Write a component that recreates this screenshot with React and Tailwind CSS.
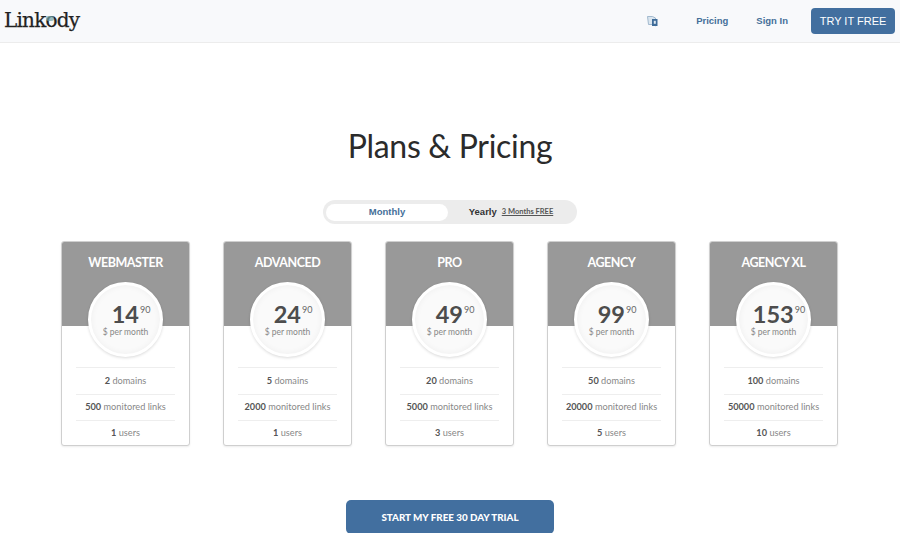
const plans = [
  { name: "WEBMASTER", price: "14", d: "2", l: "500", u: "1" },
  { name: "ADVANCED", price: "24", d: "5", l: "2000", u: "1" },
  { name: "PRO", price: "49", d: "20", l: "5000", u: "3" },
  { name: "AGENCY", price: "99", d: "50", l: "20000", u: "5" },
  { name: "AGENCY XL", price: "153", d: "100", l: "50000", u: "10" },
];

const sans = "font-['Lato','Noto_Sans',sans-serif]";

function Row({ value, label, border }) {
  return (
    <div className={`h-[26px] flex items-center justify-center text-[9.2px] text-[#888] ${border ? "border-t border-[#eeeeee] pb-[1px]" : ""}`}>
      <span><b className="font-bold text-[#555]">{value}</b> {label}</span>
    </div>
  );
}

function Card({ p }) {
  return (
    <div className="w-[129px] h-[205px] rounded-[3px] border border-[#cfcfcf] shadow-[0_1px_2px_rgba(0,0,0,0.08)] bg-white relative overflow-hidden">
      <div className="h-[84px] bg-[#999999] flex justify-center pt-[12px] text-[12.5px] tracking-[-0.45px] font-bold text-white leading-[17px]">
        {p.name}
      </div>
      <div className="absolute left-[26px] top-[40px] w-[75px] h-[75px] rounded-full border-[3px] border-white bg-[#fafafa] shadow-[0_1px_3px_rgba(0,0,0,0.15),inset_0_0_6px_rgba(0,0,0,0.05)] flex flex-col items-center">
        <div className="flex items-start mt-[19px] ml-[11px] text-[#4d4d4d] leading-none">
          <span className="text-[23.5px] font-bold leading-[20px]">{p.price}</span>
          <span className="text-[9px] ml-[1px] mt-[1px] leading-[10px] text-[#666]">90</span>
        </div>
        <div className="mt-[3px] text-[8.5px] text-[#888] leading-[11px]">$ per month</div>
      </div>
      <div className="mt-[41px] mx-[14px] border-t border-[#eeeeee]">
        <Row value={p.d} label="domains" />
        <Row value={p.l} label="monitored links" border />
        <Row value={p.u} label="users" border />
      </div>
    </div>
  );
}

export default function App() {
  return (
    <div className={`w-[900px] h-[533px] bg-white overflow-hidden ${sans}`}>
      <header className="h-[43px] bg-[#f8f9fb] border-b border-[#ececec] flex items-center">
        <div className="ml-[4px] text-[20px] leading-none font-['DejaVu_Serif',serif] text-[#222] tracking-[-0.8px] [-webkit-text-stroke:0.25px_#222] relative -top-[1px]">
          Link<span className="relative">o<span className="absolute left-[1px] top-[8px] w-[8px] h-[5px] rounded-full bg-[#6fa3a8] opacity-70" /></span>dy
        </div>
        <div className="ml-auto flex items-center font-['Liberation_Sans',sans-serif]">
          <svg width="11" height="11" viewBox="0 0 11 11" className="mr-[38px]">
            <path d="M0.5 0.5h5l3 1.5v8l-3-1.5H1.5z" fill="#dbe6ef" stroke="#8fabc4" strokeWidth="0.8" />
            <rect x="5" y="3" width="5.5" height="7" fill="#3f6c99" />
            <rect x="6.8" y="4.8" width="2" height="3" fill="#dbe6ef" />
          </svg>
          <a className="text-[9.5px] font-bold text-[#456f99] mr-[28px]">Pricing</a>
          <a className="text-[9.5px] font-bold text-[#456f99] mr-[23px]">Sign In</a>
          <a className="w-[84px] h-[26px] mr-[5px] rounded-[4px] bg-[#426f9f] text-white text-[11px] flex items-center justify-center">TRY IT FREE</a>
        </div>
      </header>

      <h1 className="mt-[81px] h-[44px] text-center text-[32px] leading-[44px] text-[#2b2b2b] font-['Lato',sans-serif] tracking-[-0.3px]">
        Plans &amp; Pricing
      </h1>

      <div className="mt-[32px] mx-auto w-[254px] h-[24px] rounded-full bg-[#ececec] flex items-center p-[3px] font-['Liberation_Sans',sans-serif]">
        <div className="w-[122px] h-[17px] rounded-full bg-white flex items-center justify-center text-[9.5px] font-bold text-[#456f99]">Monthly</div>
        <div className="flex-1 flex items-center justify-center text-[9.5px] font-bold text-[#333]">
          Yearly
          <span className={`ml-[5px] text-[7.5px] underline text-[#555] ${sans}`}>3 Months FREE</span>
        </div>
      </div>

      <div className="mt-[17px] ml-[61px] flex gap-[33px]">
        {plans.map((p) => <Card key={p.name} p={p} />)}
      </div>

      <div className="mt-[54px] flex justify-center">
        <div className="w-[208px] h-[34px] rounded-[5px] bg-[#426f9f] text-white text-[9.8px] font-black flex items-center justify-center">
          START MY FREE 30 DAY TRIAL
        </div>
      </div>
    </div>
  );
}
